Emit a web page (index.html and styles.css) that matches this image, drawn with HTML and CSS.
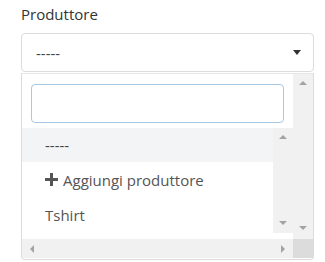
FILE: index.html
```html
<!DOCTYPE html>
<html lang="it">
<head>
    <meta charset="UTF-8">
    <title>Produttore</title>
    <link rel="stylesheet" href="styles.css">
</head>
<body>
    <div class="field">
        <label class="field-label">Produttore</label>

        <div class="select">
            <span class="select-value">-----</span>
            <span class="caret"></span>
        </div>

        <div class="dropdown">
            <div class="dropdown-body">
                <div class="search-wrap">
                    <input class="search" type="text">
                </div>
                <div class="results">
                    <ul class="results-list">
                        <li class="option active">-----</li>
                        <li class="option">
                            <svg class="plus" viewBox="0 0 13 13" width="13" height="13">
                                <rect x="5" y="0" width="3" height="13" fill="#555"/>
                                <rect x="0" y="5" width="13" height="3" fill="#555"/>
                            </svg>
                            Aggiungi produttore
                        </li>
                        <li class="option">Tshirt</li>
                    </ul>
                    <div class="vbar inner">
                        <span class="arrow up"></span>
                        <span class="arrow down"></span>
                    </div>
                </div>
            </div>
            <div class="vbar outer">
                <span class="arrow up"></span>
                <span class="arrow down"></span>
            </div>
            <div class="hbar">
                <span class="arrow left"></span>
                <span class="arrow right"></span>
            </div>
            <div class="corner"></div>
        </div>
    </div>
</body>
</html>
```

FILE: styles.css
```css
* {
    margin: 0;
    padding: 0;
    box-sizing: border-box;
}

body {
    font-family: 'Open Sans', 'Noto Sans', sans-serif;
    background: white;
    color: #333;
}

.field {
    width: 314px;
    padding: 4px 0 0 21px;
}

.field-label {
    display: block;
    font-size: 15px;
    line-height: 20px;
    color: #333;
    margin-bottom: 9px;
}

.select {
    height: 39px;
    border: 1px solid #dcdcdc;
    border-radius: 4px;
    display: flex;
    align-items: center;
    justify-content: space-between;
    padding: 0 12px 0 14px;
    font-size: 15px;
    color: #444;
}

.caret {
    width: 0;
    height: 0;
    border-left: 4px solid transparent;
    border-right: 4px solid transparent;
    border-top: 5px solid #333;
}

.dropdown {
    margin-top: 1px;
    height: 187px;
    border: 1px solid #dcdcdc;
    border-top-color: #e6e6e6;
    border-radius: 0 0 4px 4px;
    display: grid;
    grid-template-columns: 271px 20px;
    grid-template-rows: 165px 19px;
    overflow: hidden;
}

.dropdown-body {
    background: white;
}

.search-wrap {
    padding: 10px 9px 5px 9px;
}

.search {
    display: block;
    width: 100%;
    height: 39px;
    border: 1px solid #a8c8e4;
    border-radius: 4px;
    outline: none;
    background: white;
}

.results {
    display: flex;
    height: 105px;
}

.results-list {
    list-style: none;
    flex: 1;
}

.option {
    height: 35px;
    display: flex;
    align-items: center;
    gap: 5px;
    padding-left: 23px;
    font-size: 15px;
    color: #555;
}

.option.active {
    height: 34px;
    background: #f3f4f6;
    color: #444;
}

.plus {
    flex-shrink: 0;
}

.vbar {
    width: 20px;
    background: #f1f1f1;
    display: flex;
    flex-direction: column;
    align-items: center;
    justify-content: space-between;
}

.vbar.inner {
    padding: 7px 0 8px;
}

.vbar.outer {
    padding: 7px 0 9px;
}

.hbar {
    background: #f1f1f1;
    display: flex;
    align-items: center;
    justify-content: space-between;
    padding: 0 8px;
}

.corner {
    background: #dcdcdc;
}

.arrow {
    width: 0;
    height: 0;
}

.arrow.up {
    border-left: 4px solid transparent;
    border-right: 4px solid transparent;
    border-bottom: 4px solid #a3a3a3;
}

.arrow.down {
    border-left: 4px solid transparent;
    border-right: 4px solid transparent;
    border-top: 4px solid #a3a3a3;
}

.arrow.left {
    border-top: 4px solid transparent;
    border-bottom: 4px solid transparent;
    border-right: 4px solid #a3a3a3;
}

.arrow.right {
    border-top: 4px solid transparent;
    border-bottom: 4px solid transparent;
    border-left: 4px solid #a3a3a3;
}
```
